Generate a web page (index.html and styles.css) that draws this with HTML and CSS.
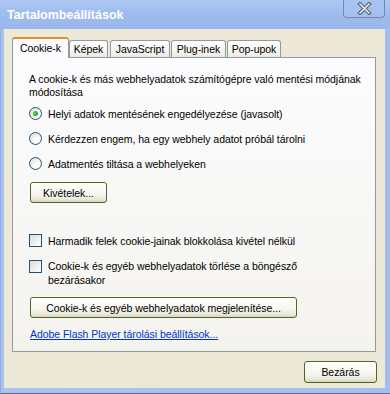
FILE: index.html
```html
<html lang="hu">
<head>
  <meta charset="UTF-8">
  <title>Tartalombeállítások</title>
  <link rel="stylesheet" href="styles.css">
</head>
<body>

<div class="window">
  <!-- Title bar -->
  <div class="titlebar">
    <span class="title">Tartalombeállítások</span>
    <button class="close-button">
      <svg width="15" height="13" viewBox="0 0 15 13">
        <path d="M3 2 L12 11 M12 2 L3 11" stroke="#56627a" stroke-width="3.8" stroke-linecap="square" fill="none"/>
        <path d="M3 2 L12 11 M12 2 L3 11" stroke="#eef2fa" stroke-width="1.5" stroke-linecap="square" fill="none"/>
      </svg>
    </button>
  </div>

  <div class="client">
    <!-- Tabs -->
    <div class="tabs">
      <div class="tab active">Cookie-k</div>
      <div class="tab images">Képek</div>
      <div class="tab scripts">JavaScript</div>
      <div class="tab plugins">Plug-inek</div>
      <div class="tab popups">Pop-upok</div>
    </div>

    <div class="panel">
      <p class="intro">A cookie-k és más webhelyadatok számítógépre való mentési módjának<br>módosítása</p>

      <label class="option first"><span class="radio checked"></span>Helyi adatok mentésének engedélyezése (javasolt)</label>
      <label class="option"><span class="radio"></span>Kérdezzen engem, ha egy webhely adatot próbál tárolni</label>
      <label class="option"><span class="radio"></span>Adatmentés tiltása a webhelyeken</label>

      <button class="button exceptions">Kivételek...</button>

      <label class="option check first-check"><span class="checkbox"></span>Harmadik felek cookie-jainak blokkolása kivétel nélkül</label>
      <label class="option check multi"><span class="checkbox"></span><span>Cookie-k és egyéb webhelyadatok törlése a böngésző<br>bezárásakor</span></label>

      <button class="button show-cookies">Cookie-k és egyéb webhelyadatok megjelenítése...</button>

      <a class="flash-link" href="#">Adobe Flash Player tárolási beállítások...</a>
    </div>

    <div class="footer">
      <button class="button close">Bezárás</button>
    </div>
  </div>
</div>

</body>
</html>
```

FILE: styles.css
```css
body {
  margin: 0;
  font-family: "Liberation Sans", Arial, sans-serif;
  font-size: 10.5px;
  letter-spacing: -0.05px;
  color: #000;
}

/* Window frame */
.window {
  width: 390px;
  height: 394px;
  box-sizing: border-box;
  background: linear-gradient(90deg, #8fa9d8, #a9c3f1 2px, #a3bdee);
  border-bottom: 1px solid #5f6f8f;
  display: flex;
  flex-direction: column;
}

.titlebar {
  height: 29px;
  display: flex;
  justify-content: space-between;
  align-items: flex-start;
  background: linear-gradient(#adc8f4, #a0bdef 40%, #9ab7eb);
}

.title {
  color: #fff;
  font-family: "Liberation Sans", Arial, sans-serif;
  font-weight: bold;
  font-size: 12.5px;
  letter-spacing: 0;
  margin: 8px 0 0 7px;
}

.close-button {
  width: 42px;
  height: 18px;
  margin-right: 5px;
  padding: 0;
  border: 1px solid #6f88b8;
  border-top: none;
  border-radius: 0 0 4px 4px;
  background: linear-gradient(#a9c4f2, #a2bff0);
  display: flex;
  justify-content: center;
  align-items: center;
}

.client {
  flex: 1;
  margin: 0 5px 5px 4px;
  padding: 9px 9px 0 8px;
  background-color: #ece9d8;
  display: flex;
  flex-direction: column;
}

/* Tabs */
.tabs {
  display: flex;
  align-items: flex-end;
  height: 20px;
  margin-bottom: -1px;
}

.tab {
  box-sizing: border-box;
  height: 18px;
  line-height: 17px;
  text-align: center;
  margin-right: 1px;
  border: 1px solid #919b9c;
  border-bottom: none;
  border-radius: 3px 3px 0 0;
  background: linear-gradient(#fefefe, #f4f3ee 70%, #e6e4dc);
}

.tab.active {
  position: relative;
  width: 57px;
  height: 21px;
  line-height: 18px;
  margin-right: 0;
  border-top: 2px solid #e68b2c;
  background: #fcfcfe;
}

.tab.images { width: 39px; margin-right: 2px; }
.tab.scripts { width: 60px; }
.tab.plugins { width: 55px; }
.tab.popups { width: 54px; }

.panel {
  height: 295px;
  box-sizing: border-box;
  border: 1px solid #919b9c;
  background: linear-gradient(#fcfcfe, #f4f3ee);
  padding: 15px 0 0 16px;
  display: flex;
  flex-direction: column;
  align-items: flex-start;
}

.intro {
  margin: 0;
  line-height: 13px;
  white-space: nowrap;
}

.option {
  display: flex;
  align-items: center;
  height: 13px;
  margin-top: 12px;
}

.option.first {
  margin-top: 8px;
}

.radio {
  width: 11px;
  height: 11px;
  border: 1px solid #1c5180;
  border-radius: 50%;
  background: radial-gradient(circle at 65% 65%, #fff 20%, #e6e5de 70%, #d4d3cb);
  margin-right: 6px;
  display: flex;
  justify-content: center;
  align-items: center;
}

.radio.checked::after {
  content: "";
  width: 5px;
  height: 5px;
  border-radius: 50%;
  background: radial-gradient(circle at 40% 40%, #5cd35c, #21a121 70%);
}

.checkbox {
  width: 11px;
  height: 11px;
  flex-shrink: 0;
  border: 1px solid #1c5180;
  background: linear-gradient(135deg, #dcdcd7, #fff);
  margin-right: 6px;
}

.option.check.first-check {
  margin-top: 31px;
}

.option.multi {
  height: auto;
  align-items: flex-start;
  line-height: 14px;
}

.option.multi .checkbox {
  margin-top: 1px;
}

/* Buttons */
.button {
  height: 21px;
  padding: 0 6px;
  font-family: "Liberation Sans", Arial, sans-serif;
  font-size: 10.5px;
  letter-spacing: -0.05px;
  color: #000;
  border: 1px solid #4a6a22;
  border-radius: 3px;
  background: linear-gradient(#fffffc, #f6f5ee 60%, #ebe8dc 85%, #d8d3c2);
  box-shadow: inset 0 1px #fff;
}

.exceptions {
  width: 77px;
  margin: 12px 0 0 1px;
}

.show-cookies {
  width: 267px;
  margin: 10px 0 0 1px;
}

.flash-link {
  margin: 10px 0 0 1px;
  line-height: 13px;
  color: #0033cc;
}

.footer {
  display: flex;
  justify-content: flex-end;
  margin: 9px -1px 0 0;
}

.close {
  width: 73px;
  height: 22px;
}
```
